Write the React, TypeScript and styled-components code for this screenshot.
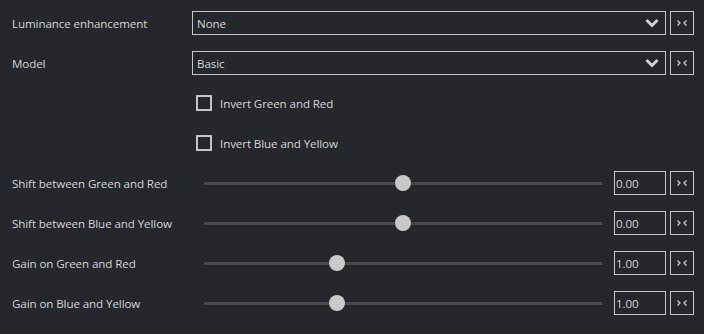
import React from "react";
import styled, { createGlobalStyle } from "styled-components";

const GlobalStyle = createGlobalStyle`
    html, body {
        margin: 0;
        padding: 0;
        background: #24272b;
    }
    body {
        font-family: "Open Sans", "DejaVu Sans", sans-serif;
        font-size: 11.6px;
        letter-spacing: -0.1px;
        color: #d3d6da;
    }
`;

interface ISliderRow {
    label: string;
    value: number;
    min: number;
    max: number;
}

const sliders: ISliderRow[] = [
    { label: "Shift between Green and Red", value: 0, min: -1, max: 1 },
    { label: "Shift between Blue and Yellow", value: 0, min: -1, max: 1 },
    { label: "Gain on Green and Red", value: 1, min: 0, max: 3 },
    { label: "Gain on Blue and Yellow", value: 1, min: 0, max: 3 },
];

function ResetIcon() {
    return (
        <svg width="12" height="8" viewBox="0 0 12 8">
            <path d="M1.5 1.5 L4 4 L1.5 6.5" fill="none" stroke="#c8cacd" strokeWidth="1.3" />
            <path d="M10.5 1.5 L8 4 L10.5 6.5" fill="none" stroke="#c8cacd" strokeWidth="1.3" />
        </svg>
    );
}

function Chevron() {
    return (
        <svg width="14" height="10" viewBox="0 0 14 10">
            <path d="M1.5 2 L7 7.5 L12.5 2" fill="none" stroke="#cfd1d4" strokeWidth="3" />
        </svg>
    );
}

export default function App() {
    return (
        <Panel>
            <GlobalStyle />
            <Row>
                <Label>Luminance enhancement</Label>
                <Controls>
                    <Select>
                        <span>None</span>
                        <Chevron />
                    </Select>
                    <ResetButton>
                        <ResetIcon />
                    </ResetButton>
                </Controls>
            </Row>
            <Row>
                <Label>Model</Label>
                <Controls>
                    <Select>
                        <span>Basic</span>
                        <Chevron />
                    </Select>
                    <ResetButton>
                        <ResetIcon />
                    </ResetButton>
                </Controls>
            </Row>
            <Row>
                <Label />
                <CheckRow>
                    <CheckBox />
                    <span>Invert Green and Red</span>
                </CheckRow>
            </Row>
            <Row>
                <Label />
                <CheckRow>
                    <CheckBox />
                    <span>Invert Blue and Yellow</span>
                </CheckRow>
            </Row>
            {sliders.map((s) => (
                <Row key={s.label}>
                    <Label>{s.label}</Label>
                    <Controls>
                        <Track>
                            <Thumb style={{ left: `${((s.value - s.min) / (s.max - s.min)) * 100}%` }} />
                        </Track>
                        <NumberBox>{s.value.toFixed(2)}</NumberBox>
                        <ResetButton>
                            <ResetIcon />
                        </ResetButton>
                    </Controls>
                </Row>
            ))}
        </Panel>
    );
}

const Panel = styled.div`
    width: 704px;
    height: 334px;
    padding-top: 3px;
    box-sizing: border-box;
    background: #24272b;
`;

const Row = styled.div`
    display: grid;
    grid-template-columns: 180px 1fr;
    align-items: center;
    height: 40px;
    padding: 0 10px 0 12px;
`;

const Label = styled.div`
    white-space: nowrap;
`;

const Controls = styled.div`
    display: flex;
    align-items: center;
    gap: 4px;
`;

const Select = styled.div`
    flex: 1;
    height: 24px;
    box-sizing: border-box;
    border: 1px solid #c4c6c8;
    display: flex;
    align-items: center;
    justify-content: space-between;
    padding: 0 6px 0 4px;
`;

const ResetButton = styled.div`
    width: 24px;
    height: 24px;
    box-sizing: border-box;
    border: 1px solid #c4c6c8;
    display: flex;
    align-items: center;
    justify-content: center;
`;

const CheckRow = styled.div`
    display: flex;
    align-items: center;
    gap: 8px;
    padding-left: 4px;
`;

const CheckBox = styled.div`
    width: 16px;
    height: 16px;
    box-sizing: border-box;
    border: 2px solid #c4c6c8;
`;

const Track = styled.div`
    position: relative;
    flex: 1;
    height: 3px;
    margin: 0 8px 0 12px;
    background: #45494d;
`;

const Thumb = styled.div`
    position: absolute;
    top: 50%;
    width: 16px;
    height: 16px;
    border-radius: 50%;
    background: #c8c9cb;
    transform: translate(-50%, -50%);
`;

const NumberBox = styled.div`
    width: 52px;
    height: 24px;
    box-sizing: border-box;
    border: 1px solid #c4c6c8;
    display: flex;
    align-items: center;
    padding-left: 1px;
`;
